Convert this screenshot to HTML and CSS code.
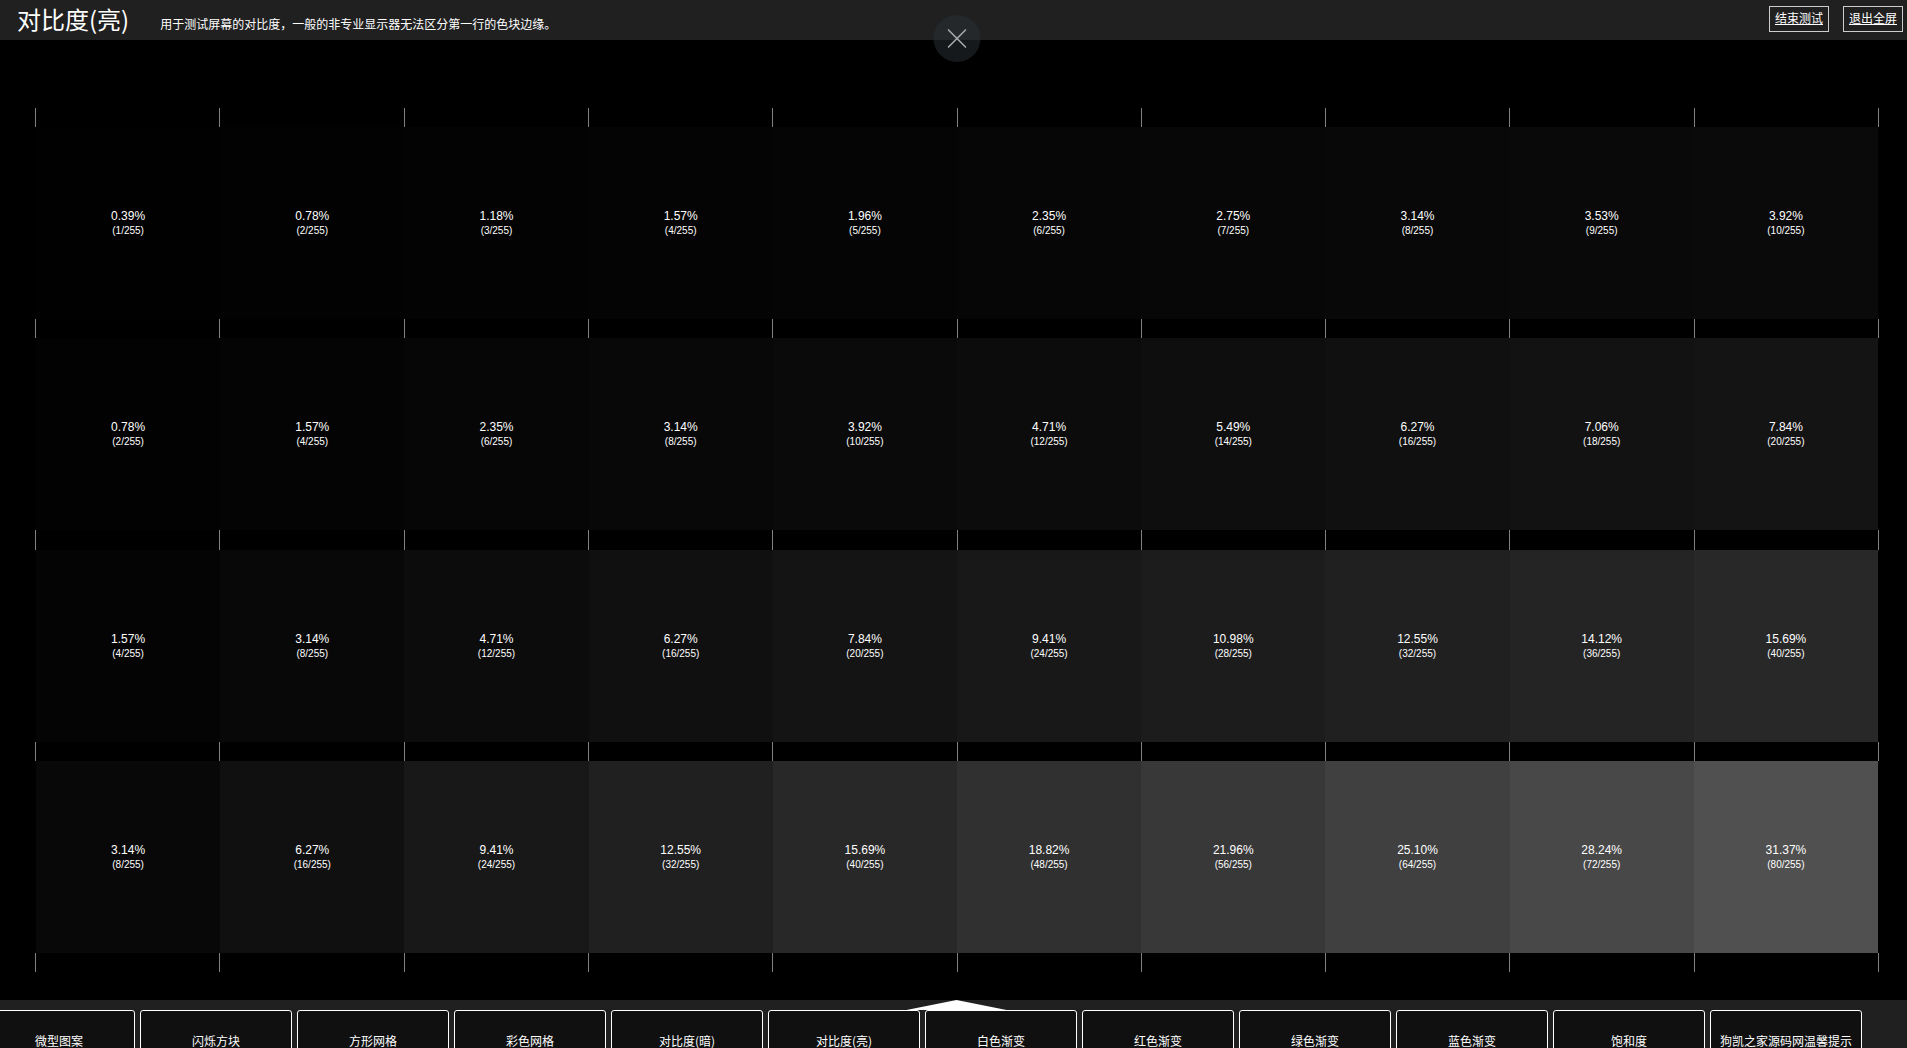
FILE: index.html
```html
<!DOCTYPE html>
<html lang="zh-CN">
<head>
    <meta charset="UTF-8">
    <meta name="viewport" content="width=device-width, initial-scale=1.0">
    <title>对比度(亮)</title>
    <link rel="stylesheet" href="styles.css">
</head>
<body>

    <header class="topbar">
        <h1 class="title">对比度(亮)</h1>
        <p class="description">用于测试屏幕的对比度，一般的非专业显示器无法区分第一行的色块边缘。</p>
        <div class="actions">
            <a class="action" href="#end">结束测试</a>
            <a class="action" href="#exit">退出全屏</a>
        </div>
    </header>

    <!-- Floating close button -->
    <button class="close" type="button" aria-label="关闭">
        <svg width="19" height="19" viewBox="0 0 19 19">
            <path d="M0.5 0.5 L18.5 18.5 M18.5 0.5 L0.5 18.5" />
        </svg>
    </button>

    <main class="stage">
        <div class="chart" id="chart"></div>
    </main>

    <footer class="bottombar">
        <div class="arrow"></div>
        <nav class="tests">
            <button class="test" type="button">微型图案</button>
            <button class="test" type="button">闪烁方块</button>
            <button class="test" type="button">方形网格</button>
            <button class="test" type="button">彩色网格</button>
            <button class="test" type="button">对比度(暗)</button>
            <button class="test" type="button">对比度(亮)</button>
            <button class="test" type="button">白色渐变</button>
            <button class="test" type="button">红色渐变</button>
            <button class="test" type="button">绿色渐变</button>
            <button class="test" type="button">蓝色渐变</button>
            <button class="test" type="button">饱和度</button>
            <button class="test" type="button">狗凯之家源码网温馨提示</button>
        </nav>
    </footer>

    <script>
        const chart = document.getElementById("chart");
        const columns = 10;
        const steps = [1, 2, 4, 8]; // Brightness step of each row

        // Row of short lines marking the edges of the blocks
        function addTicks() {
            const row = document.createElement("div");
            row.className = "ticks";
            for (let i = 0; i < columns; i++) {
                row.innerHTML += "<span class='tick'></span>";
            }
            chart.appendChild(row);
        }

        // Row of grey blocks, each one step brighter than the last
        function addBlocks(step) {
            const row = document.createElement("div");
            row.className = "blocks";
            for (let i = 1; i <= columns; i++) {
                const level = i * step;
                const percent = (level / 255 * 100).toFixed(2);
                row.innerHTML += `<div class="block" style="background-color: rgb(${level}, ${level}, ${level})">${percent}%<small class="level">(${level}/255)</small></div>`;
            }
            chart.appendChild(row);
        }

        addTicks();
        steps.forEach(step => {
            addBlocks(step);
            addTicks();
        });
    </script>

</body>
</html>
```
FILE: styles.css
```css
body {
    font-family: "Liberation Sans", "Noto Sans CJK SC", sans-serif;
    font-size: 12px;
    margin: 0;
    background-color: #000000;
    color: #ffffff;
    display: flex;
    flex-direction: column;
    height: 100vh;
    overflow: hidden;
}

/* Top bar */
.topbar {
    display: flex;
    align-items: center;
    box-sizing: border-box;
    height: 40px;
    padding: 0 4px 2px 17px;
    background-color: #202020;
}

.title {
    margin: 0;
    font-family: "Noto Sans CJK SC", sans-serif;
    font-size: 24px;
    font-weight: normal;
    line-height: 38px;
}

.description {
    margin: 0 0 0 31px;
    padding-top: 12px;
    line-height: 26px;
}

.actions {
    display: flex;
    gap: 14px;
    margin-left: auto;
}

.action {
    padding: 0 5px;
    border: 1px solid #cccccc;
    color: #ffffff;
    line-height: 24px;
}

/* Floating close button, centred over the chart */
.close {
    position: absolute;
    top: 15px;
    left: calc(50% + 3px);
    transform: translateX(-50%);
    display: flex;
    align-items: center;
    justify-content: center;
    width: 47px;
    height: 47px;
    padding: 0;
    border: none;
    border-radius: 50%;
    background-color: rgba(41, 48, 52, 0.52);
}

.close path {
    fill: none;
    stroke: #aaaaaa;
    stroke-width: 1.5;
}

/* Contrast chart */
.stage {
    flex: 1;
    display: flex;
    padding: 68px 29px 28px 35px;
}

.chart {
    flex: 1;
    display: grid;
    grid-template-rows: 1fr repeat(4, 10fr 1fr);
}

.ticks,
.blocks {
    display: grid;
    grid-template-columns: repeat(10, 1fr);
}

.ticks {
    margin-right: -1px;
    border-right: 1px solid #808080;
}

.tick {
    border-left: 1px solid #808080;
}

.blocks {
    padding-left: 1px;
}

.block {
    display: flex;
    flex-direction: column;
    align-items: center;
    justify-content: center;
    padding-top: 1px;
    line-height: 15px;
}

.level {
    font-size: 10px;
    line-height: 14px;
}

/* Bottom bar */
.bottombar {
    height: 48px;
    padding-left: 6px;
    overflow: hidden;
    background-color: #202020;
}

.arrow {
    width: 100px;
    height: 10px;
    margin: 0 auto;
    background-color: #ffffff;
    clip-path: polygon(50% 0, 100% 100%, 0 100%);
}

.tests {
    display: flex;
    gap: 5px;
    margin-left: -23px;
}

.test {
    flex: none;
    width: 152px;
    height: 60px;
    padding: 0;
    border: 1px solid #ffffff;
    border-radius: 3px;
    background-color: #101010;
    color: #ffffff;
    font-family: "Noto Sans CJK SC", sans-serif;
    font-size: 12px;
}
```
